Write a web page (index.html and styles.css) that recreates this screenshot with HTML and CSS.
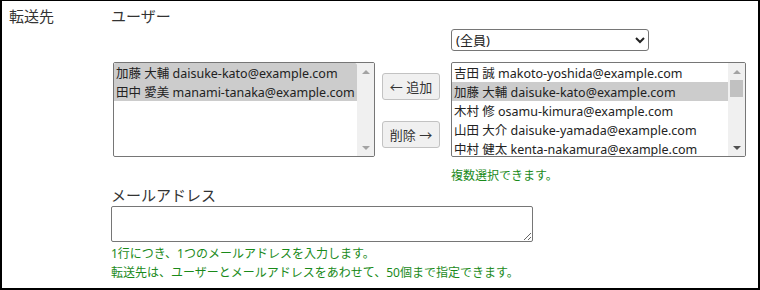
FILE: index.html
```html
<!DOCTYPE html>
<html lang="ja">
<head>
  <meta charset="UTF-8" />
  <meta name="viewport" content="width=device-width, initial-scale=1.0"/>
  <title>転送先の設定</title>
  <link rel="stylesheet" href="styles.css">
</head>
<body>

  <div class="frame">
    <div class="field-label">転送先</div>

    <div class="field-body">
      <div class="sub-label">ユーザー</div>

      <div class="picker">
        <div class="col-left">
          <div class="listbox listbox-left">
            <select class="list" multiple>
              <option selected>加藤 大輔 daisuke-kato@example.com</option>
              <option selected>田中 愛美 manami-tanaka@example.com</option>
            </select>
            <div class="scrollbar">
              <span class="arrow up off"></span>
              <span class="track"></span>
              <span class="arrow down off"></span>
            </div>
          </div>
        </div>

        <div class="col-buttons">
          <button type="button">← 追加</button>
          <button type="button">削除 →</button>
        </div>

        <div class="col-right">
          <select class="group">
            <option>(全員)</option>
          </select>
          <div class="listbox listbox-right">
            <select class="list" multiple>
              <option>吉田 誠 makoto-yoshida@example.com</option>
              <option selected>加藤 大輔 daisuke-kato@example.com</option>
              <option>木村 修 osamu-kimura@example.com</option>
              <option>山田 大介 daisuke-yamada@example.com</option>
              <option>中村 健太 kenta-nakamura@example.com</option>
              <option>田中 愛美 manami-tanaka@example.com</option>
              <option>佐藤 花子 hanako-sato@example.com</option>
              <option>鈴木 一郎 ichiro-suzuki@example.com</option>
              <option>高橋 直子 naoko-takahashi@example.com</option>
              <option>伊藤 翔 sho-ito@example.com</option>
              <option>渡辺 彩 aya-watanabe@example.com</option>
              <option>小林 拓也 takuya-kobayashi@example.com</option>
              <option>松本 陽子 yoko-matsumoto@example.com</option>
              <option>井上 亮 ryo-inoue@example.com</option>
              <option>林 美咲 misaki-hayashi@example.com</option>
              <option>清水 健 ken-shimizu@example.com</option>
              <option>森 由美 yumi-mori@example.com</option>
            </select>
            <div class="scrollbar">
              <span class="arrow up off"></span>
              <span class="track"><span class="thumb"></span></span>
              <span class="arrow down"></span>
            </div>
          </div>
          <p class="hint">複数選択できます。</p>
        </div>
      </div>

      <div class="sub-label mail-label">メールアドレス</div>
      <textarea class="mail"></textarea>
      <p class="hint hint-block">1行につき、1つのメールアドレスを入力します。<br>転送先は、ユーザーとメールアドレスをあわせて、50個まで指定できます。</p>
    </div>
  </div>

</body>
</html>
```

FILE: styles.css
```css
html, body {
  margin: 0;
  padding: 0;
  background: #fff;
}

body {
  font-family: "Noto Sans", "Noto Sans CJK JP", sans-serif;
  color: #333;
}

.frame {
  box-sizing: border-box;
  width: 760px;
  height: 290px;
  border: 2px solid #000;
  border-top-width: 1px;
  display: flex;
  padding: 4px 0 0 7px;
}

.field-label {
  width: 102px;
  font-size: 15px;
  line-height: 22px;
}

.field-body {
  display: flex;
  flex-direction: column;
  align-items: flex-start;
}

.sub-label {
  font-size: 15px;
  line-height: 22px;
}

.picker {
  display: flex;
  align-items: flex-start;
  padding-left: 2px;
}

.col-left {
  padding-top: 35px;
}

select {
  font-family: "Noto Sans", "Noto Sans CJK JP", sans-serif;
  font-size: 12.5px;
  color: #222;
}

/* listbox = select + hand drawn scrollbar */
.listbox {
  box-sizing: border-box;
  display: flex;
  height: 95px;
  border: 1px solid #767676;
  border-radius: 2px;
  overflow: hidden;
}

.listbox-left {
  width: 262px;
}

.listbox-right {
  width: 295px;
}

.list {
  flex: 1;
  min-width: 0;
  height: 100%;
  border: none;
  padding: 0;
  overflow: hidden;
  outline: none;
}

.list option {
  line-height: 18px;
  padding: 0 2px;
}

.list option:checked {
  background: linear-gradient(#cccccc, #cccccc);
  color: #222;
}

.scrollbar {
  width: 17px;
  background: #f0f0f0;
  display: flex;
  flex-direction: column;
}

.arrow {
  height: 17px;
  display: flex;
  align-items: center;
  justify-content: center;
}

.arrow::before {
  content: "";
  border-left: 4px solid transparent;
  border-right: 4px solid transparent;
}

.arrow.up::before {
  border-bottom: 4px solid #505050;
}

.arrow.down::before {
  border-top: 4px solid #505050;
}

.arrow.off.up::before {
  border-bottom-color: #a3a3a3;
}

.arrow.off.down::before {
  border-top-color: #a3a3a3;
}

.track {
  flex: 1;
}

.thumb {
  display: block;
  height: 17px;
  margin: 0 2px;
  background: #c1c1c1;
}

.col-buttons {
  display: flex;
  flex-direction: column;
  gap: 21px;
  margin-left: 7px;
  padding-top: 46px;
}

.col-buttons button {
  box-sizing: border-box;
  width: 58px;
  height: 27px;
  padding: 0;
  font-family: "Noto Sans", "Noto Sans CJK JP", sans-serif;
  font-size: 13px;
  color: #333;
  background: #f0f0f0;
  border: 1px solid #c2c2c2;
  border-radius: 3px;
  cursor: pointer;
}

.col-buttons button:hover {
  background: #e5e5e5;
}

.col-right {
  display: flex;
  flex-direction: column;
  align-items: flex-start;
  margin-left: 11px;
  padding-top: 2px;
}

.group {
  box-sizing: border-box;
  width: 198px;
  height: 22px;
  margin-bottom: 11px;
  border: 1px solid #767676;
  border-radius: 3px;
  background: #fff;
  font-size: 13px;
}

.hint {
  margin: 0;
  font-size: 12px;
  line-height: 19px;
  color: #1a8a1a;
}

.col-right .hint {
  margin-top: 9px;
}

.mail-label {
  line-height: 21px;
}

.mail {
  box-sizing: border-box;
  width: 422px;
  height: 36px;
  margin: 0;
  border: 1px solid #767676;
  border-radius: 2px;
  font-family: "Noto Sans", "Noto Sans CJK JP", sans-serif;
  font-size: 13px;
  resize: both;
}

.hint-block {
  margin-top: 2px;
}
```
